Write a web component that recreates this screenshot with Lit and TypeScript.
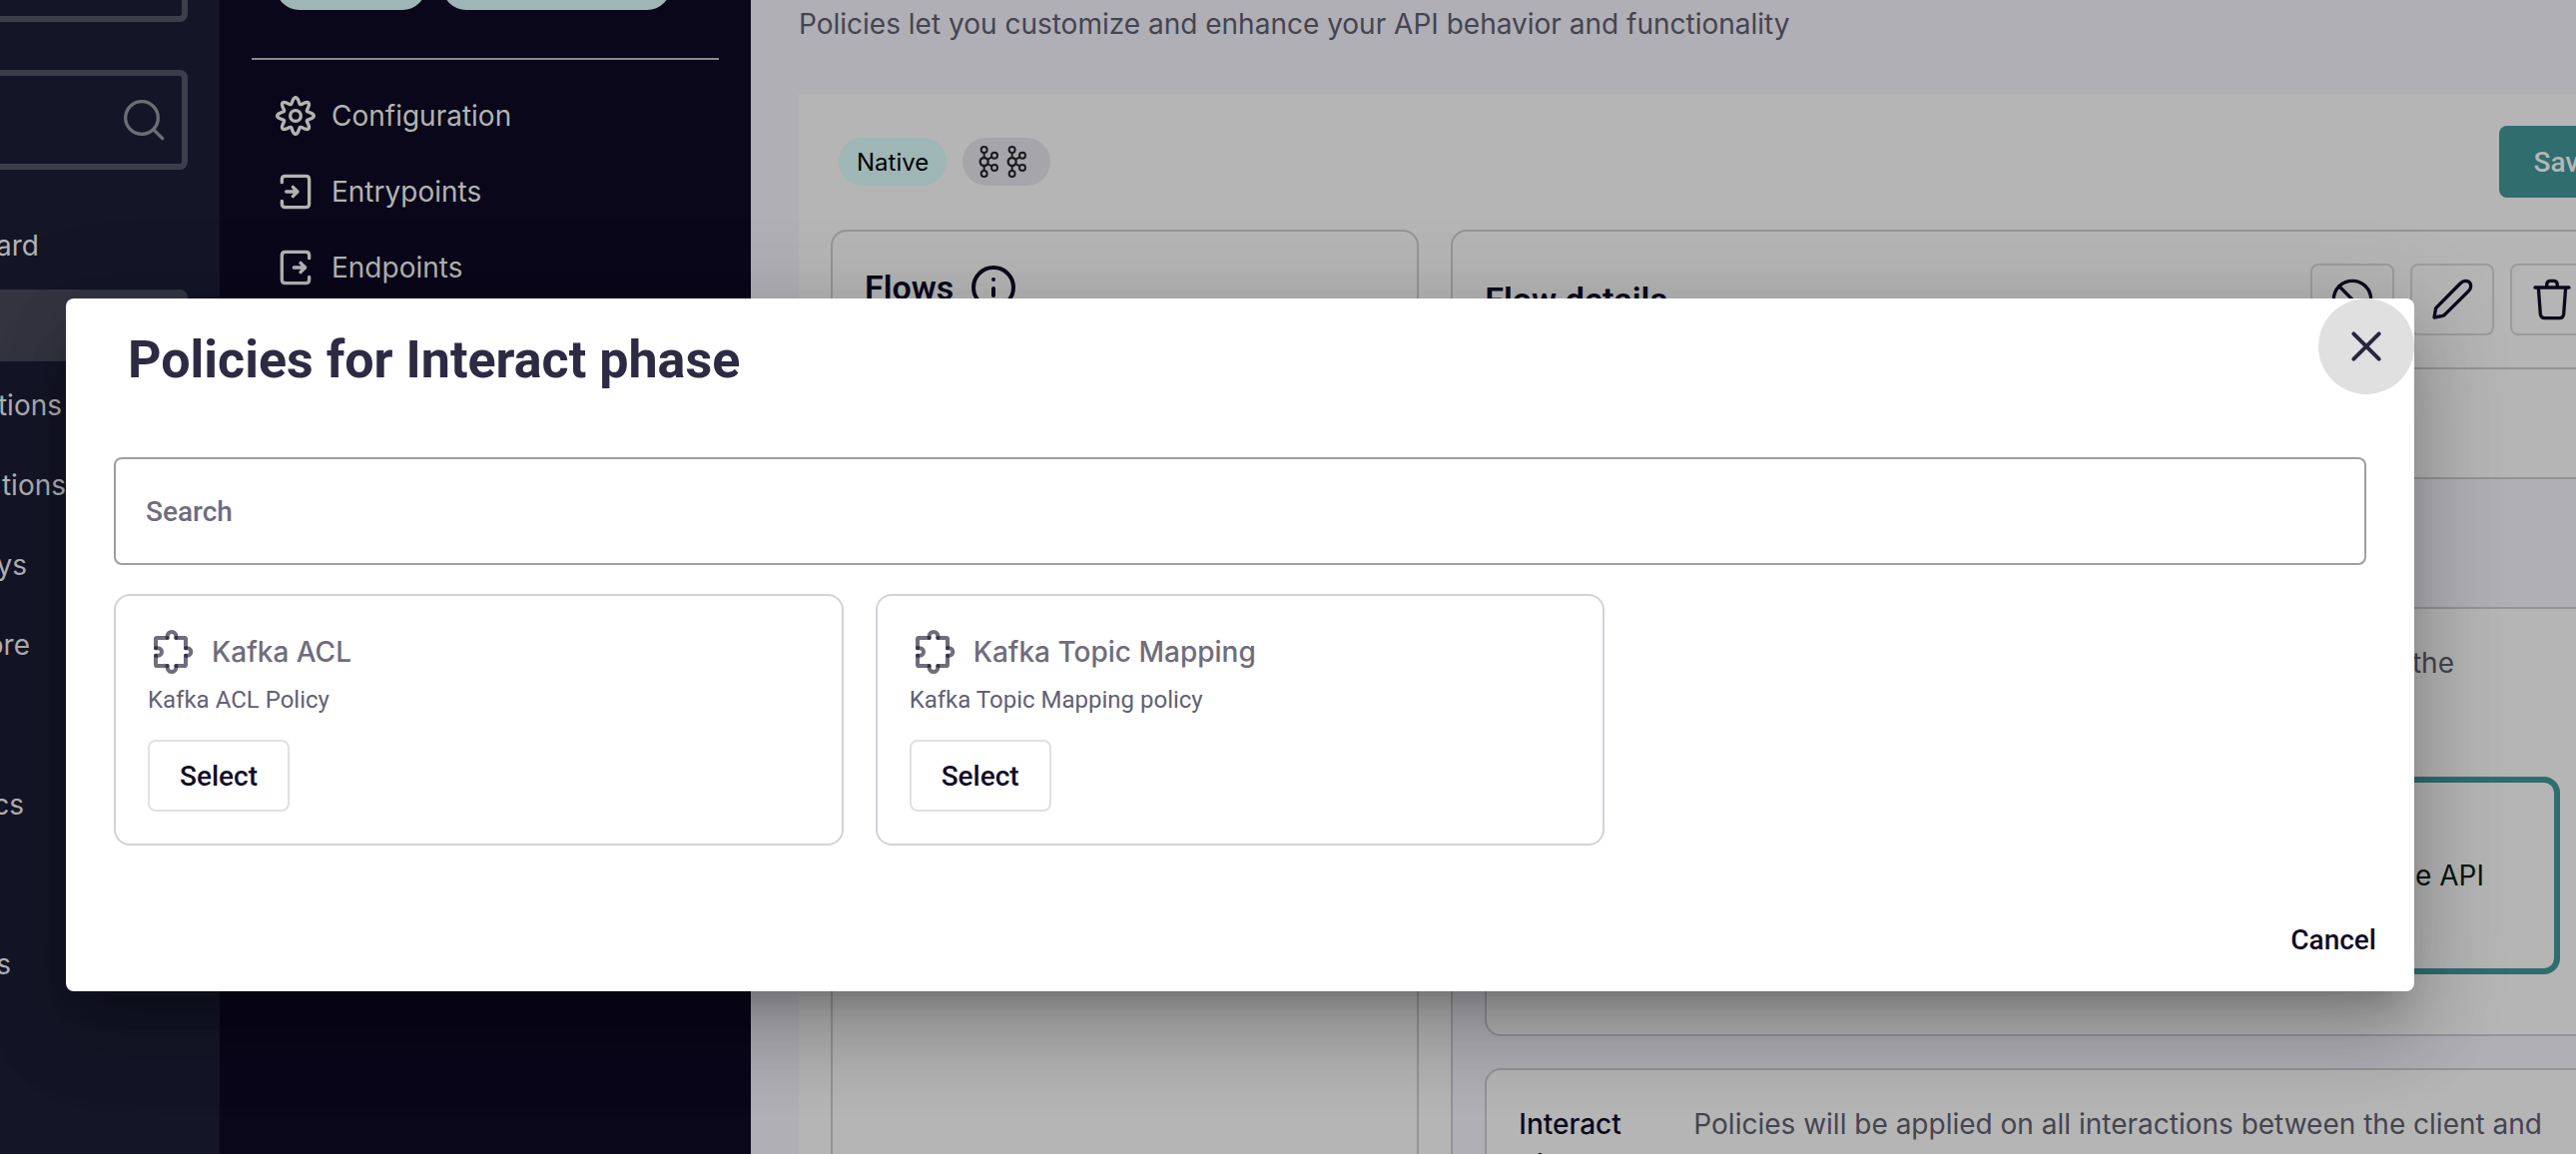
import { LitElement, html, css, svg } from "lit";
import { customElement, property, state } from "lit/decorators.js";
import { styleMap } from "lit/directives/style-map.js";

/* Eight-lobed outline of the settings gear, in a 120-unit box. */
const gearPath = (() => {
  const points: string[] = [];
  for (let i = 0; i < 160; i++) {
    const a = (i / 160) * Math.PI * 2;
    const r = 46 + 9 * Math.cos(8 * a);
    points.push(`${(60 + r * Math.sin(a)).toFixed(1)} ${(60 - r * Math.cos(a)).toFixed(1)}`);
  }
  return `M${points.join("L")}Z`;
})();

const icons = {
  settings: svg`<path d=${gearPath} /><circle cx="60" cy="60" r="16" />`,
  entry: svg`<path d="M19 32V23Q19 13 29 13H91Q101 13 101 23V97Q101 107 91 107H29Q19 107 19 97V88" />
    <path stroke-width="10" d="M32 60H66M52 46L66 60L52 74" />`,
  exit: svg`<path d="M101 32V23Q101 13 91 13H29Q19 13 19 23V97Q19 107 29 107H91Q101 107 101 97V88" />
    <path stroke-width="10" d="M55 60H89M75 46L89 60L75 74" />`,
  search: svg`<circle cx="54" cy="54" r="49" /><path d="M90 90L116 116" />`,
  ban: svg`<circle cx="60" cy="60" r="56" /><path d="M20 20L100 100" />`,
  pencil: svg`<path d="M6 114L11 86L84 12Q92 4 100 4Q116 5 116 20Q116 28 109 35L37 106Q33 109 28 110Z" />`,
  trash: svg`<path d="M9 24H111M44 24V16Q44 4 56 4H64Q76 4 76 16V24M19 24L25 104Q27 116 38 116H83Q93 116 95 104L101 24" />`,
  close: svg`<path d="M22 22L98 98" /><path d="M98 22L22 98" />`,
};

type IconName = keyof typeof icons;

@customElement("ui-icon")
class UiIcon extends LitElement {
  static styles = css`
    :host { display: inline-flex; width: 40px; height: 40px; flex: none; }
    svg { width: 100%; height: 100%; overflow: visible; }
  `;
  @property() name: IconName = "search";
  @property({ type: Number }) weight = 10;
  render() {
    return html`<svg viewBox="0 0 120 120" fill="none" stroke="currentColor" stroke-width=${this.weight}
      stroke-linecap="round" stroke-linejoin="round" aria-hidden="true">${icons[this.name]}</svg>`;
  }
}

@customElement("puzzle-icon")
class PuzzleIcon extends LitElement {
  static styles = css`
    :host { display: inline-flex; width: 48px; height: 48px; flex: none; }
    svg { width: 100%; height: 100%; }
  `;
  render() {
    return html`<svg viewBox="0 0 144 144" fill="none" stroke="#100c27" stroke-opacity="0.6" stroke-width="12"
      stroke-linecap="round" stroke-linejoin="round" aria-hidden="true">
      <path d="M59 30H28Q24 30 24 34V61" />
      <path d="M85 30H110Q114 30 114 34V61" />
      <path d="M114 83V110Q114 114 110 114H85" />
      <path d="M59 114H28Q24 114 24 110V83" />
      <path d="M59 30V25A13 13 0 0 1 85 25V30" />
      <path d="M114 61H119A11 11 0 0 1 119 83H114" />
      <path d="M85 114V119A13 13 0 0 1 59 119V114" />
      <path d="M24 61H31A11 11 0 0 1 31 83H24" />
    </svg>`;
  }
}

@customElement("kafka-icon")
class KafkaIcon extends LitElement {
  static styles = css`
    :host { display: inline-flex; width: 20px; height: 32px; flex: none; }
    svg { width: 100%; height: 100%; }
  `;
  render() {
    return html`<svg viewBox="0 0 60 96" fill="none" stroke="#1b1b1b" stroke-width="6" aria-hidden="true">
      <circle cx="17" cy="48" r="12" stroke-width="7" />
      <circle cx="17" cy="12" r="9" /><circle cx="17" cy="84" r="9" />
      <circle cx="48" cy="29" r="9" /><circle cx="48" cy="66" r="9" />
      <path d="M17 21V36M17 60V75M28 41L40 34M28 55L40 61" />
    </svg>`;
  }
}

@customElement("side-rail")
class SideRail extends LitElement {
  static styles = css`
    :host { display: block; background: #141527; color: #b3b3b3; overflow: hidden; }
    .select { height: 22px; box-sizing: border-box; margin-right: 32px; border: solid #3d3e4b; border-width: 0 6px 6px 0; border-radius: 0 0 8px 0; }
    .search { display: flex; align-items: center; height: 100px; box-sizing: border-box; margin: 48px 32px 36px 0; padding-right: 18px; border: solid #3d3e4b; border-width: 6px 6px 6px 0; border-radius: 0 8px 8px 0; color: #6d6d72; }
    .search input { flex: 1; min-width: 0; height: 100%; border: 0; background: none; outline: none; font: inherit; color: inherit; }
    ul { list-style: none; margin: 0; padding: 0; }
    li { height: 80px; display: flex; align-items: center; }
    .current { width: 188px; height: 72px; border-radius: 0 8px 8px 0; background: #343541; }
    a { display: flex; justify-content: flex-end; overflow: hidden; line-height: 40px; color: inherit; text-decoration: none; }
  `;
  private items = [
    { text: "ard", end: 39 },
    { text: "", end: 0 },
    { text: "tions", end: 62 },
    { text: "tions", end: 66 },
    { text: "ys", end: 27 },
    { text: "ore", end: 30 },
    { text: "", end: 0 },
    { text: "cs", end: 24 },
    { text: "", end: 0 },
    { text: "s", end: 11 },
  ];
  render() {
    return html`
      <div class="select"></div>
      <label class="search"><input type="text" aria-label="Search" /><ui-icon name="search"></ui-icon></label>
      <nav><ul>
        ${this.items.map((item, i) => html`<li>
          ${i === 1 ? html`<div class="current"></div>` : null}
          ${item.text ? html`<a href="#" style=${styleMap({ width: `${item.end}px` })}>${item.text}</a>` : null}
        </li>`)}
      </ul></nav>`;
  }
}

@customElement("api-nav")
class ApiNav extends LitElement {
  static styles = css`
    :host { display: block; background: #090719; color: #b3b3b3; overflow: hidden; padding: 0 32px; }
    .chips { display: flex; align-items: flex-end; gap: 16px; height: 10px; padding-left: 24px; }
    .chip { height: 48px; border-radius: 24px; background: #9fb6b6; }
    .short { width: 151px; }
    .long { width: 229px; }
    hr { height: 2px; margin: 48px 0 18px; border: 0; background: #8b8a8e; }
    a { display: flex; align-items: center; gap: 16px; height: 76px; padding-left: 24px; color: inherit; text-decoration: none; }
  `;
  private links: { icon: IconName; text: string }[] = [
    { icon: "settings", text: "Configuration" },
    { icon: "entry", text: "Entrypoints" },
    { icon: "exit", text: "Endpoints" },
  ];
  render() {
    return html`
      <div class="chips"><span class="chip short"></span><span class="chip long"></span></div>
      <hr />
      <nav>${this.links.map((l) => html`<a href="#"><ui-icon name=${l.icon}></ui-icon>${l.text}</a>`)}</nav>`;
  }
}

@customElement("policy-studio")
class PolicyStudio extends LitElement {
  static styles = css`
    :host { display: flex; flex-direction: column; box-sizing: border-box; padding: 4px 48px 0; color: #454450; background: #b0afb5; }
    p { margin: 0; line-height: 40px; }
    .intro { margin-bottom: 50px; }
    .panel { flex: 1; display: flex; flex-direction: column; gap: 32px; padding: 32px 32px 0; background: #b5b5b5; }
    .bar { display: flex; align-items: center; gap: 16px; padding-left: 8px; height: 72px; }
    .badge { display: flex; align-items: center; gap: 8px; height: 48px; padding: 0 24px 0 16px; border-radius: 24px; background: #a6a5ab; }
    .native { padding: 0 18px; background: #9fb6b6; color: #000; font-size: 24px; }
    button { font: 500 28px Roboto, "Liberation Sans", sans-serif; cursor: pointer; box-sizing: border-box; height: 72px; }
    .save { margin-left: auto; padding: 0 34px; border: 0; border-radius: 8px; background: #306d6f; color: #b5b5b5; }
    .columns { flex: 1; display: grid; grid-template-columns: 1fr 2fr; gap: 32px; }
    .box { border: 2px solid #949498; border-radius: 16px; }
    .columns > .box { border-bottom: 0; border-radius: 16px 16px 0 0; display: flex; flex-direction: column; }
    h2 { margin: 0; font: 600 34px/44px Roboto, "Liberation Sans", sans-serif; color: #0b091c; }
    .flows-head { display: flex; align-items: center; gap: 18px; padding: 34px 32px; color: #0b091c; }
    .info { width: 44px; height: 44px; }
    .head { display: flex; align-items: center; gap: 16px; padding: 32px; border-bottom: 2px solid #949498; }
    .head h2 { margin-right: auto; }
    .icon-button { width: 84px; padding: 0; display: grid; place-items: center; border: 2px solid #9c9c9c; border-radius: 8px; background: none; color: #0b091c; }
    .strip { height: 108px; border-bottom: 2px solid #949498; }
    .body { flex: 1; display: flex; flex-direction: column; gap: 32px; padding: 128px 32px 0; background: #b0afb5; }
    .phase { padding: 34px 32px; background: #b5b5b5; }
    .request { display: flex; flex-direction: column; gap: 94px; padding-bottom: 60px; }
    .lead { text-align: right; padding-right: 106px; }
    .step { display: flex; align-items: center; justify-content: flex-end; height: 198px; box-sizing: border-box; padding-right: 70px; border: 6px solid #306d6f; border-radius: 16px; color: #071514; }
    .interact { flex: 1; display: grid; grid-template-columns: 143px 1fr; gap: 32px; border-bottom: 0; border-radius: 16px 16px 0 0; }
    h3 { margin: 0; font: 500 28px/40px Inter, Roboto, "Liberation Sans", sans-serif; color: #0b091c; }
  `;
  render() {
    return html`
      <p class="intro">Policies let you customize and enhance your API behavior and functionality</p>
      <section class="panel">
        <div class="bar">
          <span class="badge native">Native</span>
          <span class="badge"><kafka-icon></kafka-icon><kafka-icon></kafka-icon></span>
          <button class="save" type="button">Save</button>
        </div>
        <div class="columns">
          <section class="box">
            <div class="flows-head">
              <h2>Flows</h2>
              <svg class="info" viewBox="0 0 44 44" fill="none" stroke="currentColor" stroke-width="4" stroke-linecap="round" aria-hidden="true">
                <circle cx="22" cy="22" r="20" /><path d="M22 23V30M22 14V14" />
              </svg>
            </div>
          </section>
          <section class="box">
            <div class="head">
              <h2>Flow details</h2>
              ${(["ban", "pencil", "trash"] as IconName[]).map((name) => html`
                <button class="icon-button" type="button" aria-label=${name}><ui-icon name=${name}></ui-icon></button>`)}
            </div>
            <div class="strip"></div>
            <div class="body">
              <div class="box phase request">
                <p class="lead">the</p>
                <div class="step">e API</div>
              </div>
              <div class="box phase interact">
                <h3>Interact phase</h3>
                <p>Policies will be applied on all interactions between the client and</p>
              </div>
            </div>
          </section>
        </div>
      </section>`;
  }
}

@customElement("policy-dialog")
class PolicyDialog extends LitElement {
  static styles = css`
    :host { display: block; background: #fff; border-radius: 8px; box-shadow: 0 22px 30px -14px rgba(0, 0, 0, 0.2), 0 48px 76px 6px rgba(0, 0, 0, 0.14), 0 18px 92px 16px rgba(0, 0, 0, 0.12); }
    header { display: flex; justify-content: space-between; align-items: flex-start; padding-left: 62px; }
    h1 { margin: 0; padding-top: 30px; font: 700 52px/64px Roboto, "Liberation Sans", sans-serif; color: #2d2a43; }
    button { font: 500 28px Roboto, "Liberation Sans", sans-serif; color: #100c27; background: none; cursor: pointer; box-sizing: border-box; height: 72px; padding: 0 30px; border: 2px solid #e0e0e0; border-radius: 8px; }
    .close { width: 96px; height: 96px; display: grid; place-items: center; padding: 0; border: 0; border-radius: 50%; background: #e0e0e0; color: #29263f; }
    .content { display: flex; flex-direction: column; gap: 29px; padding: 63px 48px 58px; }
    input { box-sizing: border-box; width: 100%; height: 108px; padding: 0 30px; border: 2px solid #9e9e9e; border-radius: 8px; outline: none; background: none; font: 500 28px Roboto, "Liberation Sans", sans-serif; color: #2d2a43; }
    input::placeholder { color: #6f6c7d; opacity: 1; }
    .cards { display: grid; grid-template-columns: repeat(3, 1fr); gap: 32px; }
    .card { padding: 32px; border: 2px solid #d3d2da; border-radius: 16px; }
    .name { display: flex; align-items: center; gap: 16px; margin: 0 0 8px; font: 500 28px/48px Inter, Roboto, "Liberation Sans", sans-serif; color: #6f6c7d; }
    .about { margin: 0 0 24px; font: 400 24px/32px Roboto, "Liberation Sans", sans-serif; color: #626075; }
    footer { display: flex; justify-content: flex-end; padding: 0 6px 16px; }
    .cancel { border-color: transparent; }
  `;
  @state() private policies = [
    { name: "Kafka ACL", about: "Kafka ACL Policy" },
    { name: "Kafka Topic Mapping", about: "Kafka Topic Mapping policy" },
  ];
  render() {
    return html`
      <header>
        <h1>Policies for Interact phase</h1>
        <button class="close" type="button" aria-label="Close"><ui-icon name="close" weight="12"></ui-icon></button>
      </header>
      <div class="content">
        <input type="text" placeholder="Search" aria-label="Search" />
        <div class="cards">
          ${this.policies.map((p) => html`<article class="card">
            <h2 class="name"><puzzle-icon></puzzle-icon>${p.name}</h2>
            <p class="about">${p.about}</p>
            <button type="button">Select</button>
          </article>`)}
        </div>
      </div>
      <footer><button class="cancel" type="button">Cancel</button></footer>`;
  }
}

@customElement("app-root")
class AppRoot extends LitElement {
  static styles = css`
    :host { display: grid; grid-template-columns: 220px 532px 1fr; height: 100vh; overflow: hidden; position: relative; font: 400 28px Inter, Roboto, "Liberation Sans", sans-serif; }
    .studio { margin-right: -132px; min-height: 100%; }
    .overlay { position: absolute; inset: 0; padding: 299px 162px 0 66px; }
  `;
  render() {
    return html`
      <side-rail></side-rail>
      <api-nav></api-nav>
      <policy-studio class="studio"></policy-studio>
      <div class="overlay"><policy-dialog role="dialog" aria-modal="true"></policy-dialog></div>`;
  }
}
